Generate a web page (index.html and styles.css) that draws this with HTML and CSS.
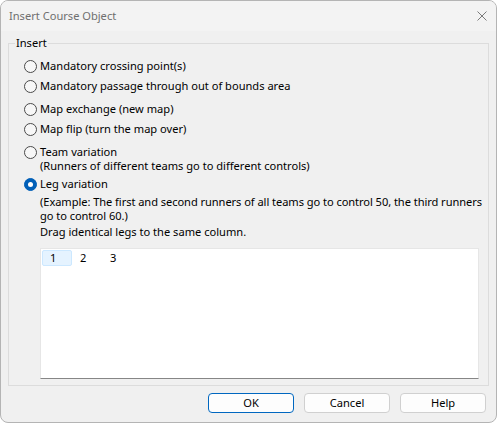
FILE: index.html
```html
<!DOCTYPE html>
<html>
<head>
<meta charset="utf-8">
<link rel="stylesheet" href="styles.css">
</head>
<body>
<div class="window">
  <div class="titlebar">
    <span class="title">Insert Course Object</span>
    <svg class="close" width="10" height="10" viewBox="0 0 10 10"><path d="M0.5 0.5 L9.5 9.5 M9.5 0.5 L0.5 9.5" stroke="#7a7a7a" stroke-width="1" fill="none"/></svg>
  </div>
  <div class="content">
    <fieldset class="group">
      <legend>Insert</legend>
      <div class="opt r1"><span class="radio"></span><span>Mandatory crossing point(s)</span></div>
      <div class="opt r2"><span class="radio"></span><span>Mandatory passage through out of bounds area</span></div>
      <div class="opt r3"><span class="radio"></span><span>Map exchange (new map)</span></div>
      <div class="opt r4"><span class="radio"></span><span>Map flip (turn the map over)</span></div>
      <div class="opt r5"><span class="radio"></span><span>Team variation</span></div>
      <div class="note">(Runners of different teams go to different controls)</div>
      <div class="opt r6"><span class="radio checked"></span><span>Leg variation</span></div>
      <div class="note ex">(Example: The first and second runners of all teams go to control 50, the third runners<br>go to control 60.)</div>
      <div class="note drag">Drag identical legs to the same column.</div>
      <div class="list">
        <div class="item sel">1</div>
        <div class="item">2</div>
        <div class="item">3</div>
      </div>
    </fieldset>
    <div class="buttons">
      <div class="btn default">OK</div>
      <div class="btn">Cancel</div>
      <div class="btn">Help</div>
    </div>
  </div>
</div>
</body>
</html>
```
FILE: styles.css
```css
html, body {
  margin: 0;
  padding: 0;
  background: #ffffff;
}
body {
  font-family: "Noto Sans", "Open Sans", sans-serif;
  font-size: 11.1px;
  color: #000;
}
.window {
  width: 497px;
  height: 423px;
  box-sizing: border-box;
  border: 1px solid #b4b4b4;
  border-radius: 8px;
  background: #f0f0f0;
  overflow: hidden;
}
.titlebar {
  height: 30px;
  background: #f3f3f3;
  display: flex;
  align-items: center;
  justify-content: space-between;
  padding: 0 9px 0 8px;
}
.title {
  color: #6f6f6f;
  line-height: 16px;
}
.close {
  display: block;
}
.content {
  padding: 0 7px 0 7px;
}
.group {
  margin: 4px 0 0 0;
  padding: 0 9px 6px 15px;
  border: 1px solid #dcdcdc;
  height: 351px;
  box-sizing: border-box;
}
.group legend {
  padding: 0 1px;
  margin-left: -9px;
  line-height: 16px;
}
.opt {
  display: flex;
  align-items: center;
  gap: 3px;
  line-height: 14px;
  height: 14px;
}
.radio {
  width: 13px;
  height: 13px;
  box-sizing: border-box;
  border: 1px solid #4a4a4a;
  border-radius: 50%;
  background: #f7f7f7;
  flex: none;
  position: relative;
}
.radio.checked {
  border-color: #005fb8;
  background: #005fb8;
}
.radio.checked::after {
  content: "";
  position: absolute;
  left: 3px;
  top: 3px;
  width: 5px;
  height: 5px;
  border-radius: 50%;
  background: #fff;
}
.r1 { margin-top: 8px; }
.r2 { margin-top: 6px; }
.r3 { margin-top: 9px; }
.r4 { margin-top: 6px; }
.r5 { margin-top: 9px; }
.r6 { margin-top: 4px; }
.note {
  margin-left: 16px;
  line-height: 14px;
}
.ex {
  margin-top: 4px;
  margin-right: -9px;
  white-space: nowrap;
  letter-spacing: -0.06px;
}
.drag { margin-top: 2px; }
.list {
  margin: 9px 0 0 16px;
  height: 131px;
  box-sizing: border-box;
  background: #fff;
  border: 1px solid #e6e6e6;
  border-bottom-color: #868686;
  display: flex;
  align-items: flex-start;
  padding: 1px 0 0 1px;
}
.item {
  width: 30px;
  height: 16px;
  box-sizing: border-box;
  padding-left: 7px;
  line-height: 14px;
  border: 1px solid transparent;
  border-radius: 2px;
}
.item.sel {
  background: #e5f3ff;
  border-color: #cce8ff;
}
.buttons {
  display: flex;
  justify-content: flex-end;
  gap: 10px;
  margin-top: 7px;
  padding-right: 3px;
}
.btn {
  width: 86px;
  height: 20px;
  box-sizing: border-box;
  border: 1px solid #d0d0d0;
  border-radius: 4px;
  background: #fdfdfd;
  text-align: center;
  line-height: 18px;
}
.btn.default {
  border-color: #0067c0;
}
```
